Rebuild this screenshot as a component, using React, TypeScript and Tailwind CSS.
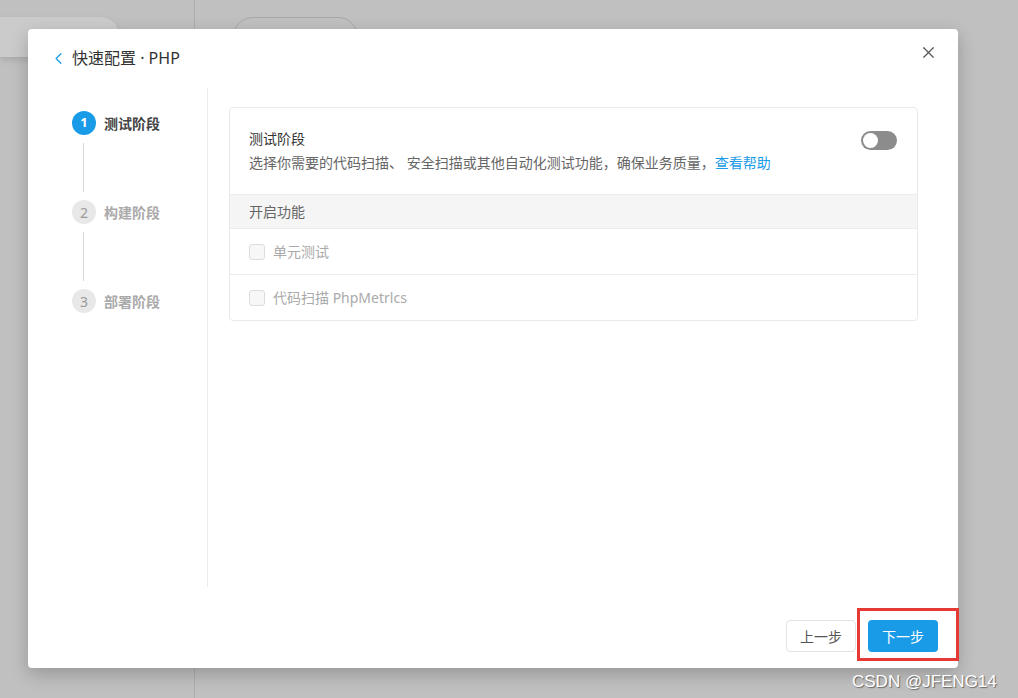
import { ChevronLeft, X } from "lucide-react";

const font = { fontFamily: '"Noto Sans", "Noto Sans CJK SC", sans-serif' };

const steps = [
  { n: 1, label: "测试阶段", active: true },
  { n: 2, label: "构建阶段", active: false },
  { n: 3, label: "部署阶段", active: false },
];

export default function App() {
  return (
    <div className="relative w-[1018px] h-[698px] overflow-hidden bg-[#c0c0c0]" style={font}>
      {/* page behind the overlay */}
      <div className="flex h-full">
        <div className="w-[195px] h-full border-r border-[#adadad] pt-[17px]">
          <div className="w-[120px] h-[40px] rounded-r-[20px] bg-[#cbcbcb] shadow-[0_3px_6px_rgba(0,0,0,0.12)]" />
        </div>
        <div className="pt-[17px] pl-[38px]">
          <div className="w-[125px] h-[40px] rounded-[20px] border border-[#a8a8a8]" />
        </div>
      </div>

      {/* modal */}
      <div className="absolute left-[28px] top-[29px] w-[930px] h-[639px] bg-white rounded-[4px] shadow-[0_6px_18px_rgba(0,0,0,0.22)] flex flex-col">
        <div className="h-[59px] shrink-0 flex items-center pl-[21px] pr-[20px]">
          <ChevronLeft size={19} strokeWidth={1.6} className="text-[#1a9be8]" />
          <span className="ml-[4px] text-[16px] text-[#333] mt-[-1px]">快速配置 · PHP</span>
          <X size={19} strokeWidth={1.5} className="ml-auto text-[#555] mt-[-12px]" />
        </div>

        <div className="flex h-[499px]">
          <div className="w-[180px] shrink-0 border-r border-[#ececec] pl-[44px] pt-[23px]">
            {steps.map((s, i) => (
              <div key={s.n}>
                <div className="flex items-center h-[24px]">
                  <div
                    className={
                      s.active
                        ? "w-[24px] h-[24px] rounded-full bg-[#1a9be8] text-white text-[13px] font-bold flex items-center justify-center"
                        : "w-[24px] h-[24px] rounded-full bg-[#e8e8e8] text-[#999] text-[14px] flex items-center justify-center"
                    }
                  >
                    {s.n}
                  </div>
                  <span
                    className={
                      s.active
                        ? "ml-[8px] text-[14px] font-bold text-[#444]"
                        : "ml-[8px] text-[14px] font-bold text-[#aaa]"
                    }
                  >
                    {s.label}
                  </span>
                </div>
                {i < steps.length - 1 && (
                  <div className="ml-[11px] w-px h-[49px] bg-[#d6d6d6] my-[8px]" />
                )}
              </div>
            ))}
          </div>

          <div className="flex-1 pl-[21px] pr-[40px] pt-[19px]">
            <div className="border border-[#eaeaea] rounded-[4px]">
              <div className="h-[86px] flex items-start pl-[19px] pr-[20px] pt-[21px]">
                <div>
                  <div className="text-[14px] text-[#333] leading-[20px]">测试阶段</div>
                  <div className="text-[14px] text-[#666] leading-[20px] mt-[4px]">
                    选择你需要的代码扫描、 安全扫描或其他自动化测试功能，确保业务质量，
                    <span className="text-[#1a9be8]">查看帮助</span>
                  </div>
                </div>
                <div className="ml-auto mt-[2px] w-[36px] h-[19px] rounded-full bg-[#8c8c8c] p-[2px]">
                  <div className="w-[15px] h-[15px] rounded-full bg-white" />
                </div>
              </div>
              <div className="h-[35px] bg-[#f5f5f5] border-y border-[#ececec] flex items-center pl-[19px] text-[14px] text-[#666]">
                开启功能
              </div>
              <div className="h-[46px] flex items-center pl-[19px] border-b border-[#ececec]">
                <div className="w-[16px] h-[16px] rounded-[3px] border border-[#dcdcdc] bg-[#f7f7f7]" />
                <span className="ml-[8px] text-[14px] text-[#aaa]">单元测试</span>
              </div>
              <div className="h-[45px] flex items-center pl-[19px]">
                <div className="w-[16px] h-[16px] rounded-[3px] border border-[#dcdcdc] bg-[#f7f7f7]" />
                <span className="ml-[8px] text-[14px] text-[#aaa]">代码扫描 PhpMetrlcs</span>
              </div>
            </div>
          </div>
        </div>

        <div className="flex-1 flex items-start justify-end pt-[33px] pr-[20px] gap-[12px]">
          <button className="w-[70px] h-[32px] rounded-[4px] border border-[#e3e3e3] text-[14px] text-[#555] bg-white">
            上一步
          </button>
          <button className="w-[70px] h-[32px] rounded-[4px] bg-[#1a9be8] text-[14px] text-white">
            下一步
          </button>
        </div>
      </div>

      {/* red highlight box */}
      <div className="absolute left-[857px] top-[608px] w-[102px] h-[53px] border-[3px] border-[#e53935]" />

      {/* watermark */}
      <div
        className="absolute left-[852px] top-[669px] text-[17px] text-white [text-shadow:1px_1px_1px_rgba(0,0,0,0.45)]"
        style={{ fontFamily: '"Liberation Sans", Arial, sans-serif' }}
      >
        CSDN @JFENG14
      </div>
    </div>
  );
}
